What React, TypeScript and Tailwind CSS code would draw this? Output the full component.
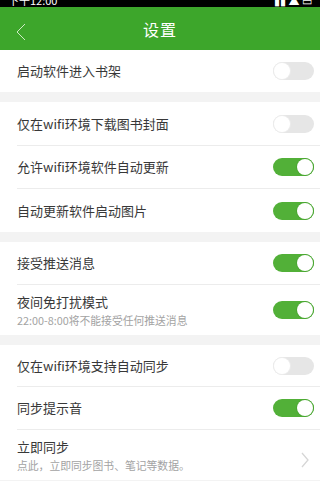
import React from 'react';

type Item = {
  label: string;
  sub?: string;
  on?: boolean;
  arrow?: boolean;
  h: string;
};

const sections: Item[][] = [
  [{ label: '启动软件进入书架', on: false, h: 'h-[42px]' }],
  [
    { label: '仅在wifi环境下载图书封面', on: false, h: 'h-[44px]' },
    { label: '允许wifi环境软件自动更新', on: true, h: 'h-[43px]' },
    { label: '自动更新软件启动图片', on: true, h: 'h-[43px]' },
  ],
  [
    { label: '接受推送消息', on: true, h: 'h-[43px]' },
    { label: '夜间免打扰模式', sub: '22:00-8:00将不能接受任何推送消息', on: true, h: 'h-[50px]' },
  ],
  [
    { label: '仅在wifi环境支持自动同步', on: false, h: 'h-[42px]' },
    { label: '同步提示音', on: true, h: 'h-[43px]' },
    { label: '立即同步', sub: '点此，立即同步图书、笔记等数据。', arrow: true, h: 'h-[50px]' },
  ],
];

const Toggle: React.FC<{ on: boolean }> = ({ on }) => (
  <div
    className={`w-[41px] h-[18px] rounded-full flex items-center p-px ${
      on ? 'bg-[#52b038] justify-end' : 'bg-[#e6e6e6] justify-start'
    }`}
  >
    <div
      className={`w-[16px] h-[16px] rounded-full bg-white ${
        on ? 'shadow-[0_0_0_1px_#4aa632]' : 'shadow-[0_0_0_1px_#ececec]'
      }`}
    />
  </div>
);

const Row: React.FC<{ item: Item; last: boolean }> = ({ item, last }) => (
  <div className={`pl-[17px] ${item.h}`}>
    <div
      className={`h-full flex items-center justify-between pr-[6px] ${
        last ? '' : 'border-b border-[#ececec]'
      }`}
    >
      <div className="flex flex-col">
        <span className="text-[13px] leading-[18px] text-[#383838]">{item.label}</span>
        {item.sub && (
          <span className="text-[10.8px] leading-[16px] text-[#a3a3a3] mt-[1px]">{item.sub}</span>
        )}
      </div>
      {item.arrow ? (
        <svg width="10" height="16" viewBox="0 0 10 16" className="mr-[4px] mt-[10px]">
          <path d="M2 1 L8 8 L2 15" fill="none" stroke="#d6d6d6" strokeWidth="1.3" />
        </svg>
      ) : (
        <Toggle on={!!item.on} />
      )}
    </div>
  </div>
);

export default function App() {
  return (
    <div
      className="w-[320px] h-[481px] overflow-hidden bg-[#f3f3f3]"
      style={{ fontFamily: '"Noto Sans CJK SC", "Noto Sans", sans-serif' }}
    >
      <div className="h-[7px] bg-black overflow-hidden flex justify-between px-[8px]">
        <span className="text-white text-[11px] leading-[11px] -mt-[5px]">下午12:00</span>
        <span className="text-white text-[11px] leading-[11px] -mt-[5px]">▮▮ ▲ ▭</span>
      </div>
      <div className="h-[43px] bg-[#3da62b] flex items-center relative">
        <svg width="14" height="18" viewBox="0 0 14 18" className="absolute left-[14px] top-[16px]">
          <path d="M11 1 L3 9 L11 17" fill="none" stroke="#cfeac6" strokeWidth="1" />
        </svg>
        <div className="flex-1 text-center text-white text-[16px] tracking-[1px]">设置</div>
      </div>
      {sections.map((sec, i) => (
        <div key={i} className={`bg-white ${i > 0 ? 'mt-[10px]' : ''}`}>
          {sec.map((item, j) => (
            <Row key={j} item={item} last={j === sec.length - 1} />
          ))}
        </div>
      ))}
    </div>
  );
}
